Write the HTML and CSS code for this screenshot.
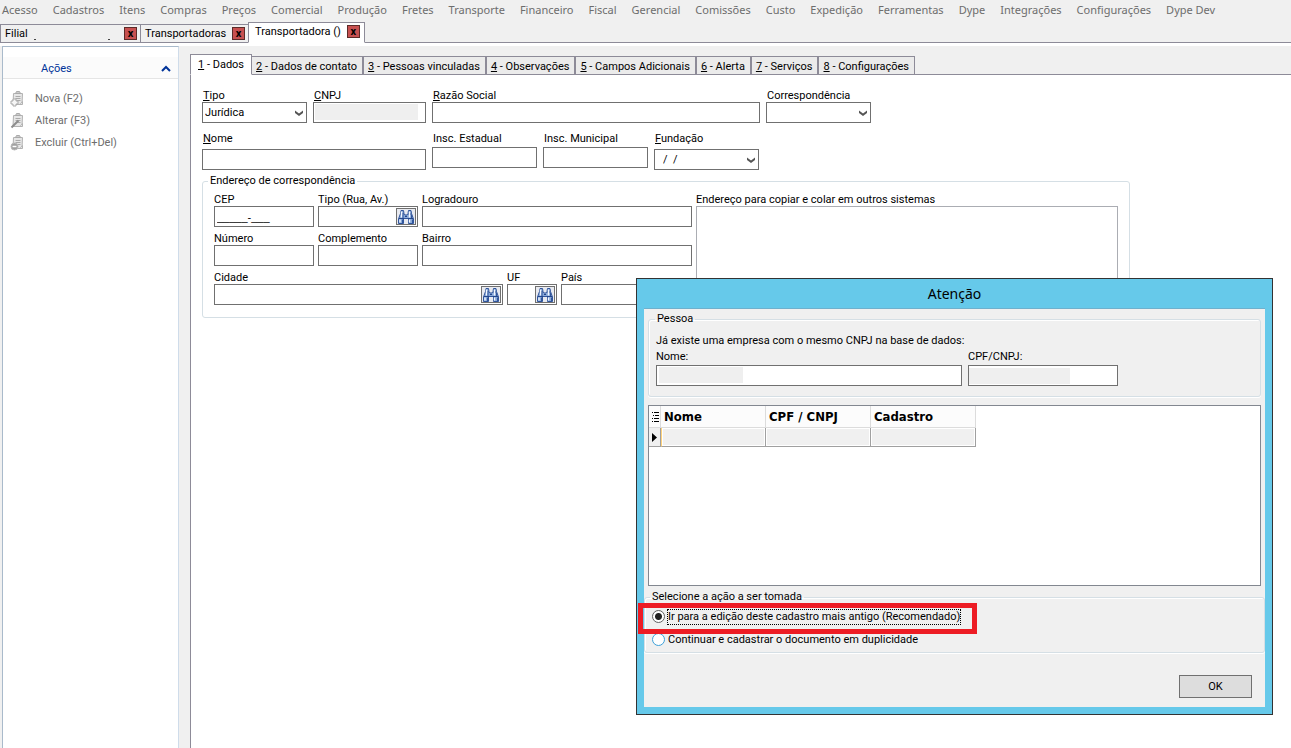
FILE: index.html
```html
<!DOCTYPE html>
<html lang="pt-BR">
<head>
  <meta charset="UTF-8" />
  <meta name="viewport" content="width=device-width, initial-scale=1" />
  <title>Transportadora</title>
  <link rel="stylesheet" href="styles.css">
</head>
<body>
  <!-- Shared icons -->
  <svg class="sprite" aria-hidden="true">
    <symbol id="icon-search" viewBox="0 0 18 14">
      <path d="M4 .5h2.500l.5 3 1 1.500h2l1-1.500.5-3H14l.5 3 2 5.500v4.500h-5V8.500h-5v5h-5V9l2-5.500z" fill="#88a8d8" stroke="#31559b" />
      <path d="M2 8.500h5M11 8.500h5M3.500 4h3.500M11 4h3.500M8 6.500h2" stroke="#23458a" stroke-width="1.200" />
      <path d="M4.500 1.500v6M12.500 1.500v6M3 9.500v3M12.500 9.500v3" stroke="#f4f8ff" stroke-width="1.400" />
      <path d="M6 5v3M14.500 5v3M5.500 9.500v3.500M15.500 9.500v3.500" stroke="#31559b" />
    </symbol>
    <symbol id="icon-down" viewBox="0 0 8 6">
      <path d="M0 0.500l4 3 4-3v2.500L4 6 0 3z" fill="#555" />
    </symbol>
    <symbol id="icon-page" viewBox="0 0 14 16">
      <path d="M3.500 2.500h9l-.5 11h-9z" fill="#e6e6e6" stroke="#b2b2b2" />
      <path d="M5.500 2.500l1-2h3l1 2z" fill="#ccc" stroke="#aaa" />
      <path d="M5.500 5.500h5M5.500 7.500h5M6.500 9.500h4" stroke="#aaa" />
      <path d="M10 13.500l2.500-3v3z" fill="#fff" stroke="#b2b2b2" />
    </symbol>
  </svg>

  <nav class="menubar">
    <a>Acesso</a><a>Cadastros</a><a>Itens</a><a>Compras</a><a>Preços</a><a>Comercial</a><a>Produção</a><a>Fretes</a><a>Transporte</a><a>Financeiro</a><a>Fiscal</a><a>Gerencial</a><a>Comissões</a><a>Custo</a><a>Expedição</a><a>Ferramentas</a><a>Dype</a><a>Integrações</a><a>Configurações</a><a>Dype Dev</a>
  </nav>

  <div class="windows">
    <div class="window-tab window-tab-wide"><span>Filial</span><span class="dots"><i></i><i></i></span><button class="close" aria-label="Fechar">x</button></div>
    <div class="window-tab"><span>Transportadoras</span><button class="close" aria-label="Fechar">x</button></div>
    <div class="window-tab active"><span>Transportadora ()</span><button class="close" aria-label="Fechar">x</button></div>
  </div>

  <div class="workspace">
    <aside class="sidebar">
      <div class="sidebar-title">
        <span>Ações</span>
        <svg width="10" height="7" viewBox="0 0 10 7"><path d="M1 6l4-4 4 4" fill="none" stroke="#003399" stroke-width="2" /></svg>
      </div>
      <button class="action">
        <svg width="14" height="16"><use href="#icon-page" /><path d="M3 8h3v2h2v3H6v2H3v-2H1v-3h2z" fill="#f6f6f6" stroke="#aaa" /></svg>
        <span>Nova (F2)</span>
      </button>
      <button class="action">
        <svg width="14" height="16"><use href="#icon-page" /><path d="M1.500 14.500l2-2 5-5" fill="none" stroke="#8d8d8d" stroke-width="2" /></svg>
        <span>Alterar (F3)</span>
      </button>
      <button class="action">
        <svg width="14" height="16"><use href="#icon-page" /><circle cx="4.500" cy="11.500" r="3.500" fill="#a0a0a0" stroke="#bbb" /><path d="M2.500 11.500h4" stroke="#fff" stroke-width="1.500" /></svg>
        <span>Excluir (Ctrl+Del)</span>
      </button>
    </aside>

    <main class="main">
      <div class="page-tabs">
        <button class="page-tab active"><u>1</u> - Dados</button>
        <button class="page-tab"><u>2</u> - Dados de contato</button>
        <button class="page-tab"><u>3</u> - Pessoas vinculadas</button>
        <button class="page-tab"><u>4</u> - Observações</button>
        <button class="page-tab"><u>5</u> - Campos Adicionais</button>
        <button class="page-tab"><u>6</u> - Alerta</button>
        <button class="page-tab"><u>7</u> - Serviços</button>
        <button class="page-tab"><u>8</u> - Configurações</button>
      </div>

      <form class="page">
        <div class="row">
          <div class="field w-small">
            <label for="tipo"><u>T</u>ipo</label>
            <div class="combo"><select id="tipo"><option>Jurídica</option></select><svg class="arrow"><use href="#icon-down" /></svg></div>
          </div>
          <div class="field w-cnpj">
            <label for="cnpj"><u>C</u>NPJ</label>
            <input type="text" id="cnpj" class="masked">
          </div>
          <div class="field w-razao">
            <label for="razao"><u>R</u>azão Social</label>
            <input type="text" id="razao">
          </div>
          <div class="field w-small">
            <label for="corresp">Correspondência</label>
            <div class="combo"><select id="corresp"><option></option></select><svg class="arrow"><use href="#icon-down" /></svg></div>
          </div>
        </div>

        <div class="row row-spaced">
          <div class="field w-nome low">
            <label for="nome"><u>N</u>ome</label>
            <input type="text" id="nome">
          </div>
          <div class="field w-small">
            <label for="estadual">Insc. Estadual</label>
            <input type="text" id="estadual">
          </div>
          <div class="field w-small">
            <label for="municipal">Insc. Municipal</label>
            <input type="text" id="municipal">
          </div>
          <div class="field w-small low">
            <label for="fundacao"><u>F</u>undação</label>
            <div class="combo date"><select id="fundacao"><option>/ &nbsp;/</option></select><svg class="arrow"><use href="#icon-down" /></svg></div>
          </div>
        </div>

        <fieldset class="address">
          <legend>Endereço de correspondência</legend>
          <div class="address-body">
            <div class="address-fields">
              <div class="address-row">
                <div class="field w-cep">
                  <label for="cep">CEP</label>
                  <input type="text" id="cep" class="mask" value="_____-___">
                </div>
                <div class="field w-cep">
                  <label for="rua">Tipo (Rua, Av.)</label>
                  <div class="lookup"><input type="text" id="rua"><button type="button" aria-label="Procurar"><svg width="18" height="14"><use href="#icon-search" /></svg></button></div>
                </div>
                <div class="field grow">
                  <label for="logradouro">Logradouro</label>
                  <input type="text" id="logradouro">
                </div>
              </div>
              <div class="address-row">
                <div class="field w-cep">
                  <label for="numero">Número</label>
                  <input type="text" id="numero">
                </div>
                <div class="field w-cep">
                  <label for="complemento">Complemento</label>
                  <input type="text" id="complemento">
                </div>
                <div class="field grow">
                  <label for="bairro">Bairro</label>
                  <input type="text" id="bairro">
                </div>
              </div>
              <div class="address-row">
                <div class="field w-cidade">
                  <label for="cidade">Cidade</label>
                  <div class="lookup"><input type="text" id="cidade"><button type="button" aria-label="Procurar"><svg width="18" height="14"><use href="#icon-search" /></svg></button></div>
                </div>
                <div class="field w-uf">
                  <label for="uf">UF</label>
                  <div class="lookup"><input type="text" id="uf"><button type="button" aria-label="Procurar"><svg width="18" height="14"><use href="#icon-search" /></svg></button></div>
                </div>
                <div class="field grow">
                  <label for="pais">País</label>
                  <input type="text" id="pais">
                </div>
              </div>
            </div>
            <div class="field w-copy">
              <label for="copiar">Endereço para copiar e colar em outros sistemas</label>
              <textarea id="copiar"></textarea>
            </div>
          </div>
        </fieldset>
      </form>
    </main>
  </div>

  <!-- Duplicate record warning -->
  <div class="dialog" role="dialog" aria-labelledby="dialog-title">
    <h1 id="dialog-title">Atenção</h1>
    <div class="dialog-body">
      <fieldset class="person">
        <legend>Pessoa</legend>
        <p>Já existe uma empresa com o mesmo CNPJ na base de dados:</p>
        <div class="row">
          <div class="field w-person">
            <label for="p-nome">Nome:</label>
            <input type="text" id="p-nome" class="masked masked-name">
          </div>
          <div class="field w-doc">
            <label for="p-cnpj">CPF/CNPJ:</label>
            <input type="text" id="p-cnpj" class="masked masked-doc">
          </div>
        </div>
      </fieldset>

      <div class="grid">
        <table>
          <thead>
            <tr>
              <th class="marker"><svg width="7" height="10" viewBox="0 0 7 10"><path d="M0 .5h1M2 .5h5M1 3.500h1M3 3.500h4M0 6.500h1M2 6.500h5M0 9.500h1M2 9.500h5" stroke="#000" /></svg></th>
              <th>Nome</th>
              <th>CPF / CNPJ</th>
              <th>Cadastro</th>
            </tr>
          </thead>
          <tbody>
            <tr>
              <td class="marker"><svg width="5" height="9" viewBox="0 0 5 9"><path d="M0 0l5 4.500L0 9z" /></svg></td>
              <td class="flag"></td>
              <td></td>
              <td></td>
            </tr>
          </tbody>
        </table>
      </div>

      <fieldset class="choices">
        <legend>Selecione a ação a ser tomada</legend>
        <div class="choice highlighted">
          <input type="radio" name="acao" id="editar" checked>
          <label for="editar">Ir para a edição deste cadastro mais antigo (Recomendado)</label>
        </div>
        <div class="choice">
          <input type="radio" name="acao" id="duplicar">
          <label for="duplicar">Continuar e cadastrar o documento em duplicidade</label>
        </div>
      </fieldset>

      <div class="buttons"><button class="ok">OK</button></div>
    </div>
  </div>
</body>
</html>
```
FILE: styles.css
```css
*, *::after {
  box-sizing: border-box;
}

body {
  margin: 0;
  min-height: 100vh;
  display: flex;
  flex-direction: column;
  background: #f0f0f0;
  color: #000;
  font: 11px/14px Roboto, sans-serif;
}

button, input, select, textarea {
  font: inherit;
  color: inherit;
  margin: 0;
  border-radius: 0;
}

.sprite {
  position: absolute;
  width: 0;
  height: 0;
}

/* Top menu */
.menubar {
  display: flex;
  gap: 15px;
  height: 22px;
  padding: 1px 2px;
  font: 11px/18px "Noto Sans", sans-serif;
  color: #6d6d6d;
  white-space: nowrap;
}

/* Open windows */
.windows {
  display: flex;
  align-items: flex-end;
  height: 24px;
  border-bottom: 3px solid #fff;
  box-shadow: inset 0 -1px #8d8b98;
}

.window-tab {
  display: flex;
  align-items: center;
  gap: 6px;
  height: 19px;
  padding: 0 3px 0 4px;
  border: 1px solid #8d8b98;
  border-right-width: 0;
  white-space: nowrap;
}

.window-tab-wide {
  width: 140px;
}

.window-tab.active {
  height: 21px;
  padding: 0 4px 2px 6px;
  border-right-width: 1px;
  border-bottom-color: #fff;
  background: #fff;
}

.dots {
  flex: 1;
  display: flex;
  justify-content: space-between;
  padding: 11px 8px 0 0;
}

.dots i {
  width: 2px;
  height: 1px;
  background: #444;
}

.close {
  width: 13px;
  height: 13px;
  padding: 0;
  border: 1px solid #5c2b28;
  background: #c75050;
  font-weight: bold;
  line-height: 9px;
}

/* Workspace */
.workspace {
  flex: 1;
  display: flex;
  gap: 11px;
  padding-left: 2px;
}

.sidebar {
  width: 177px;
  padding-top: 10px;
  border: 1px solid #a9bacb;
  border-right-color: #cfdcea;
  border-bottom: 0;
  background: #fff;
}

.sidebar-title {
  display: flex;
  align-items: center;
  justify-content: space-between;
  height: 22px;
  margin-bottom: 9px;
  padding: 2px 7px 0 38px;
  border-bottom: 1px solid #e5e5e5;
  background: #fbfbfb;
  color: #003399;
}

.action {
  display: flex;
  align-items: center;
  gap: 11px;
  width: 100%;
  height: 22px;
  padding: 0 0 0 7px;
  border: 0;
  background: none;
  color: #6d6d6d;
  line-height: 16px;
}

.main {
  flex: 1;
  display: flex;
  flex-direction: column;
  padding-top: 8px;
}

.page-tabs {
  display: flex;
  align-items: flex-end;
  height: 21px;
  box-shadow: inset 0 -1px #8d8b98;
}

.page-tab {
  height: 19px;
  padding: 2px 5px 0 4px;
  border: 1px solid #8d8b98;
  border-left-width: 0;
  border-right-width: 2px;
  background: #ebebeb;
  white-space: nowrap;
}

.page-tab:last-child {
  border-right-width: 1px;
}

.page-tab.active {
  height: 21px;
  padding: 0 7px;
  border-left-width: 1px;
  border-right-width: 1px;
  border-bottom-color: #fff;
  background: #fff;
}

.page {
  flex: 1;
  padding: 13px 11px;
  border-left: 1px solid #8d8b98;
  background: #fff;
}

/* Fields */
.row {
  display: flex;
  gap: 6px;
}

.page > .row {
  height: 43px;
}

.field label {
  display: block;
  height: 14px;
  padding-left: 1px;
  line-height: 16px;
  white-space: nowrap;
}

.row-spaced .field label {
  height: 16px;
}

.row-spaced .low label {
  height: 18px;
}

input[type="text"], select, textarea {
  display: block;
  width: 100%;
  height: 21px;
  padding: 0 2px;
  border: 1px solid #707070;
  background: #fff;
  outline: 0;
}

.w-small { width: 105px; }
.w-cnpj { width: 113px; }
.w-razao { width: 328px; }
.w-nome { width: 224px; }
.w-cep { width: 100px; }
.w-cidade { width: 289px; }
.w-uf { width: 50px; }
.w-copy { width: 422px; }
.w-person { width: 306px; }
.w-doc { width: 150px; }
.grow { flex: 1; }

.combo, .lookup {
  position: relative;
}

.combo select {
  appearance: none;
}

.combo.date select {
  padding-left: 8px;
}

.arrow {
  position: absolute;
  top: 8px;
  right: 4px;
  width: 8px;
  height: 6px;
  pointer-events: none;
}

.lookup button {
  position: absolute;
  top: 2px;
  right: 2px;
  display: flex;
  align-items: center;
  justify-content: center;
  width: 20px;
  height: 17px;
  padding: 0;
  border: 1px solid #707070;
  background: #e8eaf0;
}

.mask {
  font-family: "Liberation Sans", sans-serif;
}

input[type="text"].masked {
  background: linear-gradient(#efefef, #efefef) 1px 1px / 103px 16px no-repeat #fff;
}

input[type="text"].masked-name {
  background-size: 84px 16px;
  background-position: 2px 1px;
}

input[type="text"].masked-doc {
  background-size: 101px 16px;
  background-position: 0 2px;
}

fieldset {
  min-width: 0;
  margin: 0;
  padding: 0;
  border: 1px solid #d5dfe5;
  border-radius: 3px;
}

legend {
  margin-left: 5px;
  padding: 0 2px;
}

.address {
  width: 928px;
  padding: 4px 11px 12px;
}

.address legend {
  margin-left: -6px;
}

.address-body {
  display: flex;
  gap: 4px;
}

.address-fields {
  flex: 1;
  display: flex;
  flex-direction: column;
  gap: 4px;
}

.address-row {
  display: flex;
  gap: 4px;
}

.address textarea {
  height: 99px;
  border-color: #abadb3;
  resize: none;
}

.address .field label {
  padding-left: 0;
}

/* Dialog */
.dialog {
  position: absolute;
  top: 278px;
  left: 636px;
  width: 637px;
  padding: 0 7px 7px;
  border: 1px solid #333;
  background: #66c9ea;
}

.dialog h1 {
  margin: 0;
  font: 14px/29px "Noto Sans", sans-serif;
  text-align: center;
}

.dialog-body {
  padding-top: 3px;
  border-top: 1px solid #6fb0cd;
  background: #f0f0f0;
}

.dialog fieldset {
  box-shadow: inset 1px 1px #fff, 0 1px #fff;
}

.person {
  margin: 0 4px 8px;
  padding: 8px 7px 10px;
}

.person legend {
  margin-left: -1px;
}

.person p {
  margin: 0 0 2px;
}

.person .field label {
  height: 15px;
  padding: 0;
  line-height: 14px;
}

.grid {
  height: 181px;
  margin: 0 4px 4px;
  border: 1px solid #828790;
  background: #fff;
}

.grid table {
  border-collapse: separate;
  border-spacing: 0;
  table-layout: fixed;
  width: 327px;
}

.grid th, .grid td {
  padding: 0 3px;
  border-right: 1px solid #dcdcdc;
  border-bottom: 1px solid #dcdcdc;
  text-align: left;
}

.grid th {
  height: 22px;
  background: #fcfcfc;
  font-family: "DejaVu Sans Condensed", "DejaVu Sans", sans-serif;
  font-size: 13px;
}

.grid td {
  height: 19px;
  border-color: #a0a0a0;
  background: #f0f0f0;
  box-shadow: inset 0 0 0 1px #fff;
}

.grid .flag {
  border-left: 1px solid #ffd27a;
}

.grid .marker {
  width: 12px;
  padding: 0 0 0 3px;
  box-shadow: none;
}

.grid .marker svg {
  display: block;
}

.choices {
  padding: 1px 7px;
  height: 63px;
}

.choices legend {
  margin-left: -2px;
}

.choice {
  position: relative;
  display: flex;
  align-items: center;
  gap: 3px;
  height: 23px;
}

.choice input {
  appearance: none;
  width: 13px;
  height: 13px;
  margin: 0;
  border: 1px solid #3ca0d8;
  border-radius: 50%;
  background: #fff;
}

.choice input:checked {
  border-color: #606060;
  background: radial-gradient(circle, #222 3px, #fff 4px);
}

.choice input:checked + label {
  outline: 1px dotted #000;
}

/* Red frame round the recommended option */
.highlighted::after {
  content: "";
  position: absolute;
  z-index: 1;
  top: -2px;
  left: -14px;
  width: 339px;
  height: 31px;
  border: 5px solid #ed1c24;
  pointer-events: none;
}

.buttons {
  display: flex;
  justify-content: flex-end;
  padding: 22px 13px 9px;
}

.ok {
  width: 73px;
  height: 23px;
  border: 1px solid #707070;
  background: #ddd;
}
```
